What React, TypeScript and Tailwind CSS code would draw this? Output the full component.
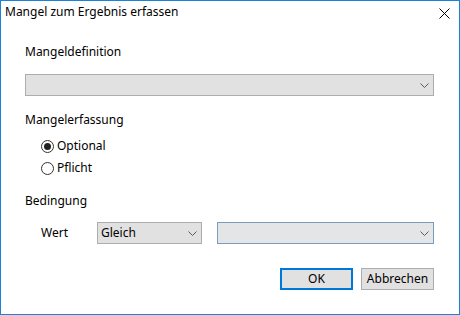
import React from 'react';

const FONT = { fontFamily: '"Noto Sans", "Segoe UI", sans-serif' };

function Chevron() {
  return (
    <svg width="9" height="5" viewBox="0 0 9 5" className="shrink-0">
      <polyline points="0.5,0.5 4.5,4.5 8.5,0.5" fill="none" stroke="#5a5a5a" strokeWidth="1" />
    </svg>
  );
}

function Combo({ value, className }: { value?: string; className: string }) {
  return (
    <div className={`flex h-[22px] items-center justify-between border pl-[3px] pr-[4px] ${className}`}>
      <span className="text-[12px] leading-[16px] text-black">{value ?? ''}</span>
      <Chevron />
    </div>
  );
}

function Radio({ label, checked }: { label: string; checked?: boolean }) {
  return (
    <div className="flex h-[16px] items-center">
      <span className="mt-[1px] flex h-[13px] w-[13px] items-center justify-center rounded-full border border-[#333] bg-white">
        {checked && <span className="h-[7px] w-[7px] rounded-full bg-[#222]" />}
      </span>
      <span className="ml-[3px] text-[12px] leading-[16px] text-black">{label}</span>
    </div>
  );
}

export default function App() {
  return (
    <div
      className="flex h-[315px] w-[460px] flex-col border border-[#1883d7] bg-white text-[12px] leading-[16px] text-black"
      style={FONT}
    >
      <div className="flex items-start justify-between pl-[4px] pr-[9px] pt-[3px]">
        <span>Mangel zum Ergebnis erfassen</span>
        <svg width="11" height="11" viewBox="0 0 11 11" className="mt-[4px]">
          <path d="M0.5 0.5 L10.5 10.5 M10.5 0.5 L0.5 10.5" stroke="#000" strokeWidth="1" />
        </svg>
      </div>

      <div className="flex flex-col pl-[24px] pr-[25px]">
        <div className="mt-[24px]">Mangeldefinition</div>
        <Combo className="mt-[14px] border-[#adadad] bg-[#e1e1e1]" />

        <div className="mt-[16px]">Mangelerfassung</div>
        <div className="mt-[10px] flex flex-col gap-[6px] pl-[16px]">
          <Radio label="Optional" checked />
          <Radio label="Pflicht" />
        </div>

        <div className="mt-[17px]">Bedingung</div>
        <div className="mt-[13px] flex items-center pl-[16px]">
          <span className="w-[56px]">Wert</span>
          <Combo value="Gleich" className="w-[105px] border-[#adadad] bg-[#e1e1e1]" />
          <Combo className="ml-[15px] flex-1 border-[#7a9cbf] bg-[#e4e5e7]" />
        </div>

        <div className="mt-[24px] flex justify-end gap-[8px]">
          <button className="flex h-[22px] w-[73px] items-center justify-center border-2 border-[#0078d7] bg-[#e1e1e1] text-[12px] leading-[16px]">
            OK
          </button>
          <button className="flex h-[22px] w-[73px] items-center justify-center border border-[#adadad] bg-[#e1e1e1] text-[12px] leading-[16px]">
            Abbrechen
          </button>
        </div>
      </div>
    </div>
  );
}
